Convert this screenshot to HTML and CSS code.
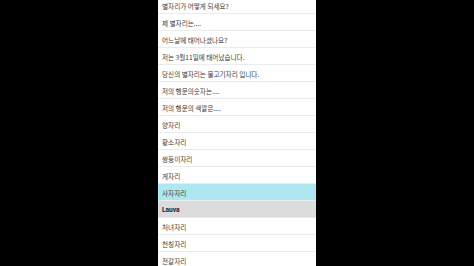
FILE: index.html
```html
<!DOCTYPE html>
<html>
<head>
<meta charset="utf-8">
<link rel="stylesheet" href="styles.css">
</head>
<body>
<div class="screen">
  <ul class="list">
    <li class="row">별자리가 어떻게 되세요?</li>
    <li class="row">제 별자리는....</li>
    <li class="row">어느날에 태어나셨나요?</li>
    <li class="row">저는 3월11일에 태어났습니다.</li>
    <li class="row">당신의 별자리는 물고기자리 입니다.</li>
    <li class="row">저의 행운의숫자는....</li>
    <li class="row">저의 행운의 색깔은....</li>
    <li class="row">양자리</li>
    <li class="row">황소자리</li>
    <li class="row">쌍둥이자리</li>
    <li class="row">게자리</li>
    <li class="row selected">사자자리</li>
    <li class="row header">Lauva</li>
    <li class="row">처녀자리</li>
    <li class="row">천칭자리</li>
    <li class="row">전갈자리</li>
  </ul>
</div>
</body>
</html>
```
FILE: styles.css
```css
html, body {
  margin: 0;
  padding: 0;
  background: #000;
  height: 100%;
  overflow: hidden;
}
.screen {
  width: 158px;
  height: 266px;
  margin-left: 158px;
  background: #fff;
  overflow: hidden;
}
.list {
  list-style: none;
  margin: -3px 0 0 0;
  padding: 0;
}
.row {
  height: 16px;
  box-sizing: border-box;
  height: 17px;
  padding-top: 1px;
  border-bottom: 1px solid #ebebeb;
  display: flex;
  align-items: center;
  padding-left: 4px;
  font-family: "Noto Sans CJK KR", "Noto Sans", sans-serif;
  font-size: 6.6px;
  color: #3a3a3a;
  white-space: nowrap;
}
.row.selected {
  background: #ade8f0;
}
.row.header {
  background: #dcdcdc;
  font-weight: bold;
  color: #222;
  font-family: "Roboto", "Noto Sans", sans-serif;
}
```
